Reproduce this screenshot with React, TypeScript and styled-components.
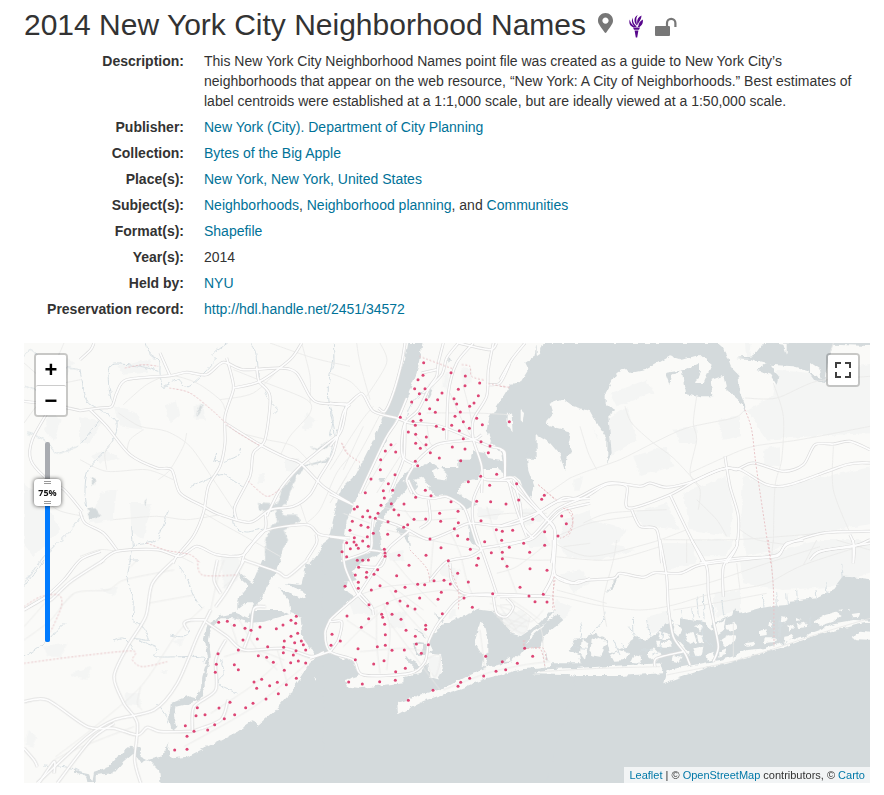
import React, { useState } from "react";
import styled, { createGlobalStyle } from "styled-components";
import { FaMapMarkerAlt } from "react-icons/fa";

const GlobalStyle = createGlobalStyle`
  * { box-sizing: border-box; }
  body {
    margin: 0;
    background: #fff;
    color: #333;
    font: 14px/20px "Liberation Sans", Arial, sans-serif;
  }
`;

const Page = styled.main`
  padding: 4px 14px 12px 24px;
`;

const Header = styled.header`
  display: flex;
  align-items: center;
  gap: 12px;
  height: 42px;
`;

const Title = styled.h1`
  margin: 0;
  font-size: 30px;
  line-height: 42px;
  font-weight: 400;
`;

const Badges = styled.div`
  display: flex;
  align-items: flex-start;
  gap: 12px;
  color: #777;
  svg { display: block; }
`;

const Pin = styled(FaMapMarkerAlt)`
  width: 15px;
  height: 20px;
  margin-right: 4px;
`;

const Metadata = styled.dl`
  display: grid;
  grid-template-columns: 160px minmax(0, 1fr);
  column-gap: 20px;
  row-gap: 6px;
  margin: 5px 14px 24px 0;
`;

const Term = styled.dt`
  font-weight: 700;
  text-align: right;
  white-space: nowrap;
`;

const Detail = styled.dd`
  margin: 0;
`;

const Link = styled.a`
  color: #007298;
  text-decoration: none;
  &:hover { text-decoration: underline; }
`;

const MapFrame = styled.section`
  position: relative;
  height: 440px;
  overflow: hidden;
  background: #fafaf8;
`;

const MapDrawing = styled.svg`
  display: block;
  width: 100%;
  height: 100%;
`;

const ZoomBar = styled.div`
  position: absolute;
  top: 10px;
  left: 10px;
  border: 2px solid rgba(0, 0, 0, 0.2);
  border-radius: 4px;
  background: #fff;
  background-clip: padding-box;
`;

const MapButton = styled.button`
  display: flex;
  align-items: center;
  justify-content: center;
  width: 30px;
  height: 30px;
  padding: 0;
  border: 0;
  border-radius: 2px;
  background: #fff;
  color: #000;
  font: bold 22px/28px "Liberation Sans", Arial, sans-serif;
  cursor: pointer;
  & + & {
    border-top: 1px solid #ccc;
  }
`;

const FullscreenBar = styled(ZoomBar)`
  left: auto;
  right: 10px;
`;

const OpacityControl = styled.label`
  position: absolute;
  top: 99px;
  left: 10px;
  width: 27px;
  height: 200px;
`;

const OpacityTrack = styled.span`
  position: absolute;
  top: 0;
  bottom: 0;
  left: 11px;
  width: 5px;
  border-radius: 2px;
  background: #a9acb1;
  overflow: hidden;
`;

const OpacityFill = styled.span`
  position: absolute;
  left: 0;
  right: 0;
  bottom: 0;
  background: #007bff;
`;

const OpacityHandle = styled.span`
  position: absolute;
  left: 0;
  display: flex;
  flex-direction: column;
  align-items: center;
  justify-content: space-between;
  width: 27px;
  height: 27px;
  margin-top: -13px;
  padding: 2px 0;
  border-radius: 4px;
  background: #fff;
  box-shadow: 0 0 4px rgba(0, 0, 0, 0.7);
  color: #111;
  font: bold 9px/13px "Open Sans", sans-serif;
`;

const Grip = styled.i`
  width: 7px;
  height: 3px;
  border: solid #999;
  border-width: 1px 0;
`;

const OpacityInput = styled.input`
  position: absolute;
  inset: 0;
  width: 100%;
  height: 100%;
  margin: 0;
  opacity: 0;
  writing-mode: vertical-lr;
  direction: rtl;
  cursor: pointer;
`;

const Attribution = styled.div`
  position: absolute;
  right: 0;
  bottom: 0;
  padding: 0 5px;
  background: rgba(255, 255, 255, 0.7);
  font-size: 11px;
  line-height: 16px;
  a { color: #0078a8; }
`;

/* Every map sheet is digitised at three units per screen pixel. */
type Sheet = {
  x: number;
  y: number;
  water?: string[];
  land?: string[];
  parks?: string[];
  streams?: string[];
  streets?: string[];
  roads?: string[];
  borders?: string[];
  points?: string;
};

const sheets: Sheet[] = [
  {
    x: 56, y: 0,
    water: [
      "555,600 575,545 595,540 585,500 540,505 530,480 590,485 605,440 660,370 750,345 755,352 680,370 650,400 630,450 620,485 600,495 610,515 655,515 660,535 610,560 625,590 605,625 600,660 555,660",
      "690,310 715,315 745,290 752,300 740,315 710,322", "20,500 45,495 65,520 30,530", "35,400 45,405 45,425 36,425", "360,187 368,190 352,218 349,214", "193,475 203,465 198,490",
    ],
    parks: [
      "0,220 70,235 30,300 0,300", "100,190 170,210 190,260 120,250", "60,450 110,440 100,530 30,540", "150,480 215,480 190,590 155,570",
      "255,190 290,175 300,215 270,240", "340,190 370,180 375,230 345,230", "535,395 555,390 550,420 535,420", "615,350 660,345 650,385 615,385",
      "110,70 215,45 200,90 130,95", "30,340 80,320 120,345 60,360", "680,210 710,230 680,265 665,255", "425,640 470,635 480,660 430,660",
    ],
    streams: [
      "195,0 210,35 238,55 240,90 250,130 290,108 320,132 370,92 405,50 400,30 440,0", "0,80 20,170 60,200 110,235 100,290 70,330 25,380 15,440 20,490",
      "95,180 85,110 95,65 180,70 235,85", "555,145 575,180 592,200 578,212", "330,430 380,410 430,395 490,430", "405,355 430,355 470,340 485,315", "265,500 230,590 160,610 150,660",
      "760,40 745,130 750,200 765,280 750,340", "460,490 465,550 500,567 550,555", "0,305 60,230", "155,550 160,610", "515,0 530,30 535,100", "400,360 410,330",
    ],
    streets: [
      "130,185 200,125 270,98 350,120 420,170 435,200", "115,210 180,250 260,265 330,310 400,410 460,500", "0,350 80,385 200,380 280,410", "320,270 310,310 270,380 235,410",
      "460,80 560,120 680,170 690,210 630,280 600,340", "570,0 700,45 810,70", "665,0 690,100 690,180", "420,170 520,150 600,75", "80,380 75,330 100,290", "480,270 560,290 640,310 700,370",
      "0,640 60,620 110,625", "100,530 230,520 320,530 420,515", "810,340 770,390 720,500 680,540", "370,510 440,550 530,600 600,640", "190,260 150,290 140,330", "800,400 750,480", "300,640 340,660", "660,480 680,540",
    ],
    roads: [
      "0,203 60,195 95,190 110,150 140,110 270,98 320,88 380,95 430,58 490,80 600,75 650,90 690,160 720,180 800,183",
      "30,200 80,250 150,335 230,375 275,380 300,450 370,490 420,515 510,538 570,500 640,490 690,455 720,400 760,330 790,210 810,185",
      "240,30 270,98", "440,45 455,100 460,140 435,220 435,300 420,370 385,430 370,510 340,580 290,640 280,660",
      "530,70 537,115 570,160 555,290 520,330 510,400 465,490 470,530", "460,135 540,115 630,50 665,0", "435,240 540,305 620,345 660,360 730,430 810,480",
      "555,510 555,560 500,620 485,660", "560,520 600,440 660,370 720,320 770,280", "60,660 110,625 230,620 300,640 350,610 410,635 490,635 550,565 680,545 720,575 810,585",
      "0,505 15,540 70,570 110,620", "708,575 710,600 680,650",
    ],
    borders: ["268,135 330,150 400,205 460,260 540,308", "505,415 560,460 600,438", "200,600 260,622 330,635 360,660", "135,75 190,65 235,70", "785,300 805,335"],
  },
  {
    x: 306, y: 0,
    water: [
      "235,0 225,50 205,100 190,150 170,200 140,270 110,330 50,450 20,520 90,450 120,390 150,330 170,285 195,235 230,165 260,90 278,0",
      "540,125 500,190 478,225 470,260 485,300 510,325 520,345 540,350 620,350 620,0 600,120",
      "245,375 270,372 300,355 330,375 385,375 385,350 420,350 430,325 465,330 475,345 540,355 540,400 500,378 455,378 440,410 400,420 375,450 320,460 280,420 245,455 225,410 195,480 180,490 160,500 185,455 215,400",
      "150,405 165,405 160,420 148,415", "355,38 363,55 355,62", "300,138 308,142 298,165 293,160",
    ],
    land: ["308,383 330,372 350,390 345,412 315,408", "252,410 280,402 300,430 270,450"],
    parks: ["395,75 425,80 420,120 400,130", "345,90 355,90 350,140 340,130", "330,425 380,430 360,450 330,450", "275,165 300,120 310,130 280,180"],
    streams: ["0,200 10,230 0,280", "10,0 12,60 5,80", "225,240 240,190 270,155 290,150", "45,180 40,230 20,270"],
    streets: ["0,90 60,115 95,150", "80,0 90,60 120,170", "150,0 170,60 110,160", "0,380 90,240 130,190", "20,450 100,310 150,215", "290,210 430,210 540,215", "290,240 300,300 320,310", "360,150 400,240 430,290", "250,270 300,330", "100,450 165,340 200,300", "140,450 210,340", "400,130 420,210 430,290", "40,380 100,250"],
    roads: [
      "0,180 50,185 95,152 130,205 200,225 240,240 310,245 360,260 430,290 480,310 520,325 525,405", "50,185 35,260 0,310", "225,0 215,60 190,150 165,205 145,195",
      "340,0 325,60 320,100 300,130 265,200 225,240 215,300 220,345 255,365", "385,0 350,45 335,95 280,150", "430,0 380,60 355,150 350,290",
      "490,0 475,80 470,160 430,230 430,290 455,370 455,450", "245,370 320,305 430,290 455,275", "470,125 510,120 540,60", "230,165 200,235 165,290 90,450",
      "225,240 222,340 200,400 180,450", "250,370 230,410 245,450", "540,412 470,410 455,400", "275,90 320,80", "385,0 480,20 500,0",
    ],
    borders: ["268,40 370,78", "395,65 420,70 425,100 465,112", "475,122 530,132", "35,300 50,330 90,358"],
    points:
      "281,59 279,97 264,110 363,89 406,99 449,120 405,128 385,139 336,150 254,137 285,137 268,152 289,170 323,170 372,167 380,183 245,177 299,197 316,208 432,180 445,158 419,190 391,207 269,212 375,220 211,223 249,235 273,232 256,247 400,236 440,226 457,245 319,250 340,259 365,247 388,263 418,256 235,267 257,274 289,282 257,301 288,305 400,287 453,296 271,316 301,329 480,309 475,329 367,312 405,318 183,305 166,324 197,327 152,350 151,380 328,345 392,353 256,355 263,368 195,395 123,408 175,422 160,443 188,442 106,449 286,442 415,416 452,400 500,394 479,427 538,236",
  },
  {
    x: 306, y: 137,
    water: [
      "30,30 70,-10 105,-10 85,40 70,75 50,120 45,170 35,210 40,243 70,235 120,215 130,150 145,105 180,60 215,10 250,0 225,30 195,70 160,110 150,140 152,190 158,212 140,225 110,240 80,258 65,275 80,300 40,310 45,330 75,350 0,400 -40,400 -60,260 0,160",
      "320,0 380,0 385,40 440,75 400,90 375,60 340,40 320,20", "560,-20 610,0 605,45 598,58 580,35", "415,135 425,130 430,170 445,195 435,200 418,175",
      "195,142 235,150 240,210 228,180",
    ],
    parks: ["330,10 375,20 380,50 340,45", "440,80 520,90 500,120 445,110", "560,95 620,80 640,120 580,140", "580,170 640,150 660,200 600,205", "20,300 30,310 25,330", "330,250 390,270 380,300 330,285", "170,220 220,210 225,240 180,245", "700,120 780,90 780,190 690,190"],
    streets: [
      "150,80 240,95 350,90 400,85", "225,90 250,120 300,120 380,115", "360,155 390,220 410,300 430,350", "85,345 170,320 270,310 360,300", "120,390 220,350 350,330 400,340", "470,80 500,180 530,260 560,340",
      "445,110 540,100 650,100", "520,230 600,240 670,240", "170,150 300,180 450,210", "90,250 160,300 280,390", "190,240 240,300 320,380", "40,100 120,130", "60,160 130,180", "310,180 300,300", "640,200 560,260 500,280", "700,200 780,190", "540,20 560,90",
    ],
    roads: [
      "0,42 70,75", "0,170 50,178", "130,115 125,160 120,210 45,240", "140,115 200,135 235,150 295,178 360,155 420,130 520,138 600,115 680,65 780,55", "240,150 180,200 150,245 85,345",
      "85,258 150,260 165,220 120,210", "235,0 260,45 310,55 350,50 400,80 420,130 440,190 455,210 500,340", "295,60 300,120 270,145", "455,0 430,60 430,130 455,210",
      "455,205 570,185 610,175 660,125 700,90 780,70", "455,210 420,230 350,245 300,300", "550,0 570,70 580,140 610,175", "530,0 580,50 640,110 675,150 668,280 640,340",
      "40,190 45,260 85,345 130,390", "670,285 735,310 780,295", "360,250 365,300 400,340 500,348",
    ],
    borders: ["625,15 680,60", "700,85 725,95 728,130 710,165 690,175", "240,210 290,265 300,310", "355,255 385,330 385,390", "672,290 668,390"],
    points:
      "560,11 303,47 257,52 163,54 153,76 184,71 222,72 363,65 440,64 482,65 528,72 566,60 643,46 635,58 82,80 73,87 192,89 113,92 144,100 206,105 329,100 384,94 98,110 120,111 136,115 67,124 174,125 252,118 287,117 332,124 385,128 453,122 608,118 695,108 709,131 93,136 114,142 233,134 221,142 373,146 499,149 517,154 548,151 644,155 60,151 130,160 173,163 383,167 413,178 300,177 684,168 112,170 73,173 72,186 98,183 50,188 464,185 515,181 581,190 538,202 644,196 79,195 115,199 61,206 85,205 36,215 163,208 165,219 165,229 333,203 421,208 484,218 517,217 599,217 50,230 207,226 288,226 445,235 517,236 82,241 98,241 115,240 355,242 237,256 440,256 531,259 600,266 86,262 143,269 110,277 132,283 109,292 76,285 200,287 383,280 651,271 312,302 342,301 85,307 263,313 284,314 361,312 415,306 45,319 85,325 150,317 225,322 570,322 124,330 197,334 334,337 488,341 640,343 597,348 269,354 324,358 402,354 210,363 172,370 117,374 233,378 615,365 651,366 427,382 255,387",
  },
  {
    x: 476, y: 0,
    water: [
      "130,0 120,30 75,60 85,80 60,120 30,130 20,190 0,220 -20,260 0,320 20,400 45,400 65,415 95,465 103,430 85,380 78,330 100,270 150,300 180,335 195,385 200,340 218,330 205,295 210,265 150,250 138,235 160,210 152,182 190,168 220,190 270,205 295,250 322,290 322,360 335,330 325,220 345,205 317,180 317,150 350,90 370,78 390,90 440,80 510,40 545,50 600,35 635,65 610,120 585,120 600,85 600,60 555,80 495,90 510,130 515,100 545,80 555,150 600,160 640,160 635,110 670,98 680,140 720,175 738,210 735,185 720,150 715,95 695,75 680,35 660,0",
      "705,45 760,40 790,0 1130,-10 1130,10 1000,5 985,50 975,120 945,115 920,80 880,70 810,65 835,100 830,125 810,95 770,80 800,60 750,48",
    ],
    land: ["24,205 35,220 38,265 22,245", "62,200 72,210 68,240 62,235", "365,95 395,92 360,110", "820,0 860,0 860,35 850,5", "930,60 960,80 965,105 930,90"],
    parks: [
      "330,150 440,110 460,150 350,190", "320,230 380,190 410,290 330,340", "520,260 590,250 590,300 540,300", "650,230 720,220 720,280 670,290", "790,320 840,310 840,370 790,365",
      "830,80 930,90 1130,60 1130,270 1000,275 800,290 740,200 820,160", "1070,400 1105,380 1105,450 1070,460", "735,0 755,0 750,40 738,40", "400,340 500,310 520,370 420,400", "220,410 250,400 240,440 220,440",
      "550,450 680,400 700,500 690,580 570,560", "200,560 270,530 380,560 350,600 240,620", "400,510 500,480 540,560 430,550", "730,400 820,430 1130,370 1130,540 900,580 830,620 740,640 720,540", "570,590 700,590 680,640 600,640", "280,255 300,290 290,285",
    ],
    streets: [
      "210,405 260,385 360,350 460,300 560,255 700,225 730,205", "375,190 395,240 460,300 520,345 600,430", "590,160 580,240 590,290 570,390 600,440 595,500", "240,250 265,330 290,380", "130,460 210,405",
      "735,165 830,165 950,115 1110,100", "820,120 850,220 845,350 825,430 820,600", "570,390 680,340 760,310 900,290 1110,250", "250,540 330,510 500,500", "160,600 270,640 450,600 560,560",
      "490,590 700,590 850,580 970,570", "1000,310 1000,440 1050,570", "720,560 770,590 860,605", "590,470 650,530 680,580", "1000,0 990,30", "170,580 270,540 400,520", "560,590 560,660",
    ],
    roads: [
      "0,550 110,510 190,465 230,465 325,420 420,430 450,420 500,433 580,415 660,380 720,380 800,425 870,425 1040,365 1110,360",
      "0,610 90,585 170,500 260,460 320,425 380,430 385,495 510,455 600,405 680,375 710,380 760,360 850,385 910,365 945,305 1000,303 1050,295 1110,320",
      "395,500 420,550 470,560 485,660", "510,455 560,560 610,660", "675,340 690,430 715,520 710,610 680,660", "600,660 720,645 830,640 860,605 970,570 1110,565",
      "930,650 960,625 1060,610 1110,590", "1050,575 1063,610 1060,660", "0,410 40,405 90,470 150,540 165,570 155,660", "25,410 50,500 80,580", "0,320 15,330 15,400", "75,0 35,50 0,110",
    ],
    borders: ["735,200 755,260 770,380 812,660", "115,425 165,470", "200,498 215,520 218,550 205,580", "0,130 30,133"],
  },
  {
    x: 476, y: 197,
    water: [
      "1130,120 1060,112 1030,110 1000,150 950,175 870,182 860,195 820,198 780,205 725,220 705,205 700,225 640,250 570,240 540,235 540,255 500,250 470,280 440,300 400,290 380,320 330,340 320,300 290,280 250,295 225,300 205,330 240,345 245,370 145,370 140,340 132,380 160,388 480,370 490,400 350,408 220,408 100,405 60,383 0,400 -300,460 -500,800 1130,800",
      "-20,240 20,260 50,300 60,290 120,250 150,215 165,210 140,240 185,228 145,248 100,275 60,330 30,370 -20,380", "365,95 355,100 320,160 340,140",
    ],
    land: [
      "100,403 140,388 480,374 490,395 350,408 220,406", "490,430 500,390 660,360 850,308 960,270 1000,250 1060,240 1130,243 1068,255 960,282 850,322 620,385", "1055,290 1080,275 1130,280 1130,300 1070,298",
      "245,300 265,310 255,360 240,340", "275,300 300,290 320,310 300,350 270,345", "330,345 360,330 390,340 380,360 340,362", "400,345 425,350 420,368 390,365", "440,345 460,320 485,345 465,365",
      "525,250 545,265 535,290 520,275", "555,285 580,275 590,305 570,315", "590,280 610,285 612,310 596,305", "535,300 550,315 570,345 545,330", "680,255 700,245 710,265 695,275 680,270", "660,300 685,285 710,290 705,305 680,320",
      "480,270 510,280 505,300 475,300", "465,305 510,305 515,320 470,320", "580,325 610,320 605,345 590,350", "780,272 800,268 800,285 780,288", "808,240 820,245 815,260 805,255", "790,295 830,295 830,305 790,310", "845,232 860,235 855,250 842,245", "865,255 885,262 870,275", "890,230 905,238 890,240", "890,250 915,245 925,260 895,265", "850,290 880,285 870,303 848,305", "735,310 765,305 760,315 740,317",
      "940,245 975,225 1010,215 1025,225 1000,245 960,258", "1015,210 1025,208 1025,215", "1045,205 1052,205 1052,212", "1055,222 1080,218 1078,230 1060,232", "620,345 640,335 645,355 625,362", "695,352 740,330 800,325 720,352",
      "620,240 636,250 640,275 622,262", "644,255 668,245 680,235 672,270 650,285", "585,255 610,262 600,274", "520,345 545,350 535,366 515,362", "655,335 680,325 675,345 655,350",
    ],
    parks: ["170,0 320,10 400,30 300,60 200,50", "180,100 250,90 270,130 220,160", "480,10 580,10 590,70 500,90", "720,60 960,0 1130,0 1130,90 1000,140 850,150 730,130", "640,160 720,150 720,210 650,230", "170,180 220,200 190,240 150,270", "440,230 500,215 510,260 450,280"],
    streams: ["240,250 245,280 240,300", "315,215 310,240 285,270 270,285", "400,230 402,290", "385,260 410,290 425,310", "440,240 450,290", "340,300 360,345", "365,310 385,340", "510,330 545,345 600,350", "605,240 610,290 635,320", "610,165 612,235", "590,170 595,230", "545,210 550,240", "500,215 520,245", "665,180 672,230", "820,230 825,280 845,310", "490,260 480,330 460,345", "210,320 260,325", "560,270 550,310", "575,205 580,240", "640,195 642,235", "420,330 460,330", "930,230 930,260", "840,235 840,290", "790,165 792,205", "830,160 832,200", "860,160 862,195", "890,150 892,185", "945,150 950,180", "980,130 985,165", "1025,70 1030,115"],
    streets: [
      "0,170 160,168 290,195 420,210 520,195 620,165 700,150 800,130 910,75 1110,10", "0,195 50,200 120,260 130,340 135,385", "165,50 330,60 480,20", "350,0 340,60 310,180 320,260", "500,150 620,130 800,70 960,20", "950,0 910,75", "820,0 815,60 820,150", "710,70 720,150", "1010,0 1110,30", "170,150 320,190", "120,395 300,385 480,380", "500,405 720,358 960,280 1110,235", "520,210 640,190 800,160", "700,250 700,350",
    ],
    roads: [
      "480,0 500,110 505,200 520,290 555,340 570,375", "575,0 620,80 625,160 640,240 655,320 640,365", "710,0 710,20 670,80 670,170", "160,0 165,105 215,130 240,122 340,115 360,100 430,112 465,98 540,100 600,75 720,60 830,45 860,10 910,0",
      "1060,0 1060,70", "130,165 165,100", "465,380 470,355 550,335", "0,170 130,168", "940,48 970,32 1110,10",
    ],
    borders: ["805,0 820,140 822,320", "165,120 158,170 165,210", "75,300 75,325 120,325 135,380"],
  },
  {
    x: 286, y: 247,
    water: [
      "60,-40 110,-20 100,10 125,20 80,75 55,90 45,150 60,190 130,215 150,255 130,262 105,270 115,290 150,295 280,277 282,262 330,248 355,215 358,260 400,272 395,300 350,315 265,340 262,372 340,335 440,300 530,265 640,237 720,228 800,260 700,600 -60,600 -60,120 -10,-80",
      "355,190 370,180 355,150 380,120 400,105 440,85 470,75 500,55 540,60 570,80 600,130 640,140 645,160 700,110 740,70 760,90 700,140 690,170 650,175 630,200 600,195 590,215 530,232 430,290 395,300 385,265 400,240 390,195",
      "308,165 325,155 350,160 345,195 320,195", "283,197 330,225 320,240 285,205", "312,115 350,140 348,145 315,120", "370,65 400,90 395,100",
    ],
    land: ["495,150 510,95 520,100 535,160 535,185 525,200 530,232 515,230 520,200 495,160", "0,172 15,185 15,210 -20,215", "262,340 345,310 400,296 430,280 470,258 530,232 600,218 680,215 720,210 720,228 640,237 530,265 440,300 340,333 264,372", "318,165 340,165 335,190 320,188", "580,215 600,200 605,215"],
    parks: ["110,20 170,15 190,75 130,70", "350,200 390,200 395,260 370,265", "235,65 290,65 280,115 240,115", "530,75 640,60 660,90 640,140 600,120", "270,340 330,315 340,330 290,350", "420,60 440,55 440,80 415,85"],
    streets: ["240,100 300,180 390,300", "200,60 200,160 210,250", "150,185 280,175 350,185", "340,210 390,195 375,260 345,215", "110,90 200,150", "220,40 240,120 230,240", "100,170 150,120 240,40", "540,40 600,60 660,95 700,60", "570,90 640,130 660,80", "560,60 600,100 650,110", "590,20 650,60 690,90", "280,30 350,100", "240,0 280,60 360,150", "510,120 525,240", "400,300 530,250 640,225 720,215", "545,60 610,130", "560,80 640,100", "590,110 650,70", "600,130 650,90", "570,50 620,120"],
    roads: ["0,205 60,185 30,195 60,185", "150,10 60,90 95,95 85,150 60,185", "60,90 45,130 60,185 130,210 160,255 300,250 345,215 358,150 400,80 480,15 720,20", "150,10 185,50 190,75", "550,20 560,70 590,80 610,50 590,25"],
    borders: ["440,0 455,15", "640,150 640,170", "675,175 700,175 710,210"],
    points:
      "397,71 111,78 176,86 215,73 218,82 246,73 273,88 347,106 347,118 154,112 224,103 288,121 66,133 226,134 316,139 91,153 63,166 202,170 226,166 246,181 283,180 319,162 355,164 334,190 144,176 136,209 191,222 222,212 286,235 257,245 256,271 209,275 157,282 116,276 295,331 369,301 444,289 452,277 479,265 521,258 558,244 587,239 577,215 527,199 622,220 668,199 644,175",
  },
  {
    x: 0, y: 217,
    water: [
      "412,690 405,630 380,605 350,590 350,565 320,560 280,590 255,620 210,635 205,665 195,640 150,630 150,638 185,645 190,669 215,669 215,645 270,640 300,605 330,580 350,610 370,600 410,590 430,560 445,520 435,480 440,430 490,408 515,415 530,390 535,350 550,300 540,240 550,195 590,168 635,158 675,175 690,130 665,130 640,150 640,120 690,60 715,0 770,0 740,60 720,100 700,135 690,150 770,150 800,165 795,120 765,85 840,115 850,100 780,70 835,75 840,30 895,-30 900,690",
      "640,35 690,75 684,85 645,50",
    ],
    land: [
      "562,200 555,240 560,290 545,350 545,385 530,415 500,430 455,440 450,465 460,500 440,520 432,570 445,595 490,590 570,550 640,515 690,480 700,500 750,455 790,410 850,320 875,295 860,270 835,235 830,170 805,160 720,185 680,188 630,175 590,175",
      "765,85 780,70 850,100 840,115", "870,355 876,355 876,362",
    ],
    parks: ["570,340 610,330 640,370 590,400", "660,330 730,320 740,360 680,380", "60,260 130,250 110,290 70,290", "140,340 200,320 190,360 150,350", "10,510 40,530 30,560 5,555", "410,330 430,330 430,342 412,342", "590,0 650,0 640,60 600,90", "520,450 590,430 600,460 540,480", "720,420 780,380 760,430", "300,400 350,400 350,440 310,435", "440,240 480,235 470,260", "600,490 690,430 700,450 620,500", "225,85 285,80 270,110"],
    streams: ["320,0 310,60 330,120 330,180 360,205 375,240 330,235 400,265 395,290 530,290 540,310", "465,20 490,60 515,120 540,150", "0,80 60,0", "0,290 60,250 120,190", "270,240 300,235 330,270", "400,430 430,470 430,490", "60,615 120,620 160,630 185,650", "590,300 600,340 580,370 640,400", "680,185 690,170", "435,225 480,230 500,210", "320,0 345,0"],
    streets: [
      "0,240 80,180 150,100 250,90 300,60 420,35 450,30", "370,130 510,105", "95,590 200,510 350,380 460,220 540,140", "90,600 150,570 250,530 330,500", "350,380 340,430 355,450", "340,0 320,20", "560,150 580,60 600,0", "640,170 700,270 760,330", "760,270 790,370", "600,290 690,270 780,300", "480,560 690,440 850,310", "0,200 80,110", "620,190 640,250", "110,140 150,100", "600,80 650,40", "560,460 680,380 760,310",
    ],
    roads: [
      "0,150 60,115 80,120 140,65 240,0", "450,0 385,70 365,170 310,260 270,350 300,430 340,490 332,600 350,669", "0,425 70,420 190,500 270,505 340,525 370,502 410,515 505,514",
      "40,669 190,530 270,480 390,450 460,370 520,230 545,180", "100,669 200,540 270,490", "545,185 610,230 660,270 780,265 860,290 900,275", "660,0 610,90 575,140", "545,180 500,180 480,190 490,210",
      "605,240 575,300 575,390 510,440 505,510", "505,514 590,480 612,420", "660,265 680,210 690,145 725,140", "660,0 760,35 790,50 850,0", "590,100 570,60 580,0", "0,565 30,600 40,620", "45,669 90,605 90,640", "545,180 560,150",
    ],
    borders: ["0,310 150,290 325,273 325,300 355,320 430,305", "0,140 50,110 105,105 112,140 80,215", "520,0 535,45 640,45"],
    points:
      "584,187 610,184 631,196 663,205 681,211 708,201 757,206 777,195 801,181 817,169 815,190 821,220 801,229 781,243 657,240 700,237 812,248 832,243 838,254 779,262 731,260 643,270 845,270 816,272 778,278 808,285 582,281 703,287 728,292 748,307 800,308 823,303 845,309 577,313 631,314 643,329 574,337 781,331 817,355 713,358 690,366 760,367 737,377 787,374 698,385 763,401 726,417 618,427 687,430 585,444 665,443 520,443 516,467 543,464 601,476 632,464 484,497 572,494 510,514 551,510 489,529 489,568 452,570",
  },
  {
    x: 0, y: 0,
    parks: ["100,30 150,60 120,120 90,90", "0,420 60,470 110,560 30,640 0,600", "80,200 110,230 90,290 60,260"],
    streams: ["0,40 20,20 50,50 60,110 100,75 170,80", "10,270 60,290 100,330 160,310", "0,720 60,640 90,610 140,560 170,520", "0,130 60,150"],
    streets: ["0,240 60,170 130,190 170,200", "30,440 100,500 180,520", "120,0 90,60 40,90", "0,60 80,120 170,110"],
    roads: ["0,175 80,185 168,203", "75,200 25,290 20,350 60,400 120,440 175,505", "168,50 200,20 210,0", "0,800 60,765 120,710 170,650 230,625"],
  },
];

const curve = (list: string) => {
  const p = list.split(" ").map((pair) => pair.split(",").map(Number));
  let d = `M${p[0]}`;
  for (let i = 0; i < p.length - 1; i++) {
    const a = p[i - 1] || p[i];
    const b = p[i];
    const c = p[i + 1];
    const e = p[i + 2] || c;
    d += `C${b[0] + (c[0] - a[0]) / 7},${b[1] + (c[1] - a[1]) / 7} ${c[0] - (e[0] - b[0]) / 7},${c[1] - (e[1] - b[1]) / 7} ${c}`;
  }
  return d;
};

type Kind = "water" | "land" | "parks" | "streams" | "streets" | "roads" | "borders";

const Shapes = ({ kind }: { kind: Kind }) => (
  <>
    {sheets.map((s, i) => (
      <g key={i} transform={`translate(${s.x} ${s.y}) scale(${1 / 3})`}>
        {(s[kind] || []).map((list, n) =>
          kind === "water" || kind === "land" || kind === "parks" ? (
            <polygon key={n} points={list} />
          ) : (
            <path key={n} d={curve(list)} />
          )
        )}
      </g>
    ))}
  </>
);

const NeighborhoodMap = ({ opacity }: { opacity: number }) => (
  <MapDrawing viewBox="0 0 846 440" preserveAspectRatio="xMidYMid slice" role="img" aria-label="Map of New York City neighborhoods">
    <defs>
      <filter id="coast" x="-10" y="-10" width="866" height="460" filterUnits="userSpaceOnUse" colorInterpolationFilters="sRGB">
        <feTurbulence type="fractalNoise" baseFrequency="0.14" numOctaves="3" seed="4" result="n" />
        <feDisplacementMap in="SourceGraphic" in2="n" scale="5" xChannelSelector="R" yChannelSelector="G" />
      </filter>
    </defs>
    <g filter="url(#coast)">
      <g fill="#f4f5f4"><Shapes kind="parks" /></g>
      <g fill="#d4dadc"><Shapes kind="water" /></g>
      <g fill="#fafaf8"><Shapes kind="land" /></g>
      <g fill="none" stroke="#d6dee2" strokeWidth="3"><Shapes kind="streams" /></g>
    </g>
    <g fill="none" strokeLinejoin="round">
      <g stroke="#e9e9e8" strokeWidth="2.5"><Shapes kind="streets" /></g>
      <g stroke="#dcdcdc" strokeWidth="9"><Shapes kind="roads" /></g>
      <g stroke="#fdfdfd" strokeWidth="5"><Shapes kind="roads" /></g>
      <g stroke="#e8c4c7" strokeWidth="3" strokeDasharray="6 5"><Shapes kind="borders" /></g>
    </g>
    <g fill="#d9265f" opacity={opacity}>
      {sheets.map((s) =>
        (s.points || "").split(" ").filter(Boolean).map((pair) => {
          const [px, py] = pair.split(",").map(Number);
          return <circle key={`${s.x}-${s.y}-${pair}`} cx={s.x + px / 3} cy={s.y + py / 3} r="1.5" />;
        })
      )}
    </g>
  </MapDrawing>
);

const Torch = () => (
  <svg width="14" height="25" viewBox="0 -2 14 25" fill="#57068c" aria-label="NYU" role="img">
    <path d="M4 12.500h7l-1 2.300H5zM5.600 15.400h3.800L8.200 22.500H6.800z" />
    <path d="M.8 4.500C-.5 8 1 11 4 12.200L6.500 12C3 10 1.300 8 .8 4.500zM4 2.500C1.500 6 3.500 10 6.500 12l1.300-.5C4.800 9 3.300 6 4 2.500zM8.800 0C4 2.500 5 8 8 10.500 8 7 6 4.500 8.800 0zM12.500 .5C8 2.500 7.300 7 8.800 10.500 9 7 12.500 5 12.500 .5zM13.800 4.500c-3.300 2-4 4-4.500 6.500L8.500 12h2c2.500-2 3.800-3.500 3.300-7.500z" />
  </svg>
);

const OpenLock = () => (
  <svg width="22" height="23" viewBox="0 -4 22 23" aria-label="Public" role="img">
    <rect x="0" y="9" width="15" height="10" rx="1" fill="currentColor" />
    <path d="M12 10V6a4.200 4.200 0 0 1 8.400 0v4" fill="none" stroke="currentColor" strokeWidth="2.200" />
  </svg>
);

const App = () => {
  const [value, setValue] = useState(75);
  return (
    <>
      <GlobalStyle />
      <Page>
        <Header>
          <Title>2014 New York City Neighborhood Names</Title>
          <Badges>
            <Pin />
            <Torch />
            <OpenLock />
          </Badges>
        </Header>
        <Metadata>
          <Term>Description:</Term>
          <Detail>
            This New York City Neighborhood Names point file was created as a guide to New York City’s neighborhoods that appear on the web resource, “New York: A City of Neighborhoods.” Best estimates of label centroids were established at a 1:1,000 scale, but are ideally viewed at a 1:50,000 scale.
          </Detail>
          <Term>Publisher:</Term>
          <Detail><Link href="#publisher">New York (City). Department of City Planning</Link></Detail>
          <Term>Collection:</Term>
          <Detail><Link href="#collection">Bytes of the Big Apple</Link></Detail>
          <Term>Place(s):</Term>
          <Detail><Link href="#place">New York, New York, United States</Link></Detail>
          <Term>Subject(s):</Term>
          <Detail>
            <Link href="#neighborhoods">Neighborhoods</Link>, <Link href="#planning">Neighborhood planning</Link>, and <Link href="#communities">Communities</Link>
          </Detail>
          <Term>Format(s):</Term>
          <Detail><Link href="#format">Shapefile</Link></Detail>
          <Term>Year(s):</Term>
          <Detail>2014</Detail>
          <Term>Held by:</Term>
          <Detail><Link href="#nyu">NYU</Link></Detail>
          <Term>Preservation record:</Term>
          <Detail><Link href="http://hdl.handle.net/2451/34572">http://hdl.handle.net/2451/34572</Link></Detail>
        </Metadata>
        <MapFrame>
          <NeighborhoodMap opacity={Math.min(1, 0.2 + (0.65 * value) / 75)} />
          <ZoomBar>
            <MapButton type="button" aria-label="Zoom in">+</MapButton>
            <MapButton type="button" aria-label="Zoom out">−</MapButton>
          </ZoomBar>
          <OpacityControl>
            <OpacityTrack><OpacityFill style={{ height: `${value}%` }} /></OpacityTrack>
            <OpacityHandle style={{ top: `${100 - value}%` }}>
              <Grip />
              {value}%
              <Grip />
            </OpacityHandle>
            <OpacityInput type="range" min={0} max={100} value={value} aria-label="Layer opacity" onChange={(e) => setValue(Number(e.target.value))} />
          </OpacityControl>
          <FullscreenBar>
            <MapButton type="button" aria-label="Full screen">
              <svg width="16" height="16" viewBox="0 0 16 16" fill="none" stroke="#404040" strokeWidth="2">
                <path d="M6 1H1v5M10 1h5v5M6 15H1v-5M10 15h5v-5" />
              </svg>
            </MapButton>
          </FullscreenBar>
          <Attribution>
            <Link href="https://leafletjs.com">Leaflet</Link> | © <Link href="https://www.openstreetmap.org/copyright">OpenStreetMap</Link> contributors, © <Link href="https://carto.com">Carto</Link>
          </Attribution>
        </MapFrame>
      </Page>
    </>
  );
};

export default App;
